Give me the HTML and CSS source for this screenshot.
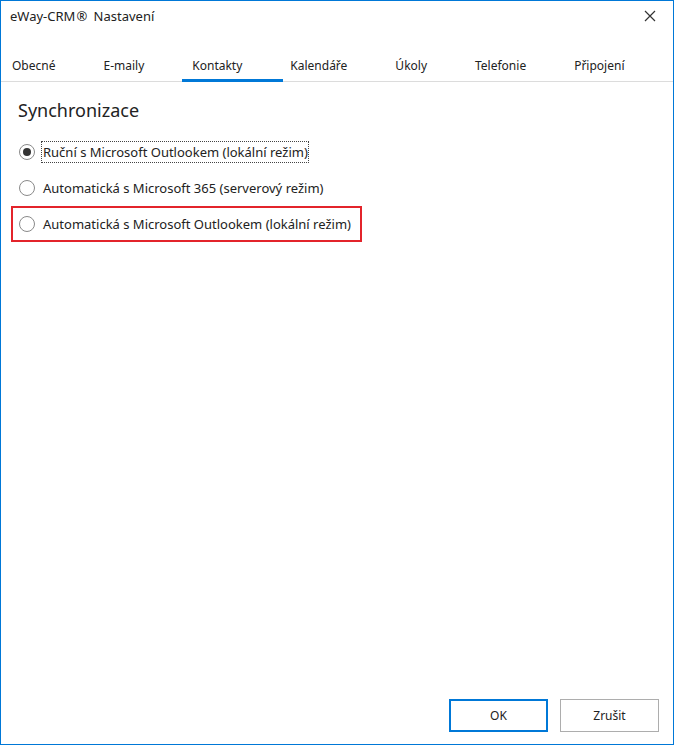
FILE: index.html
```html
<!DOCTYPE html>
<html lang="cs">
<head>
<meta charset="utf-8">
<title>eWay-CRM® Nastavení</title>
<link rel="stylesheet" href="styles.css">
</head>
<body>
<div class="window">
  <div class="titlebar">
    <span class="title">eWay-CRM<span class="reg">®</span> Nastavení</span>
    <span class="close" aria-label="Zavřít">
      <svg width="12" height="12" viewBox="0 0 12 12"><path d="M1 1 L11 11 M11 1 L1 11" stroke="#333" stroke-width="1.2" fill="none"/></svg>
    </span>
  </div>
  <div class="tabs">
    <div class="tab">Obecné</div>
    <div class="tab">E-maily</div>
    <div class="tab active">Kontakty</div>
    <div class="tab">Kalendáře</div>
    <div class="tab">Úkoly</div>
    <div class="tab">Telefonie</div>
    <div class="tab">Připojení</div>
  </div>
  <div class="content">
    <h1 class="heading">Synchronizace</h1>
    <div class="options">
      <div class="option"><span class="radio checked"></span><span class="label focused">Ruční s Microsoft Outlookem (lokální režim)</span></div>
      <div class="option"><span class="radio"></span><span class="label">Automatická s Microsoft 365 (serverový režim)</span></div>
      <div class="option highlight"><span class="radio"></span><span class="label">Automatická s Microsoft Outlookem (lokální režim)</span></div>
    </div>
  </div>
  <div class="footer">
    <button class="btn primary">OK</button>
    <button class="btn">Zrušit</button>
  </div>
</div>
</body>
</html>
```

FILE: styles.css
```css
* { box-sizing: border-box; }
html, body { margin: 0; padding: 0; background: #fff; }
body {
  font-family: "Noto Sans", "Open Sans", sans-serif;
  font-size: 12px;
  color: #222;
}
.window {
  width: 674px;
  height: 745px;
  border: 1px solid #0078d7;
  display: flex;
  flex-direction: column;
  background: #fff;
}
.titlebar {
  height: 30px;
  display: flex;
  align-items: center;
  justify-content: space-between;
  padding: 0 17px 0 9px;
}
.title { font-size: 13px; color: #222; }
.reg { margin: 0 3px 0 1px; }
.close { display: flex; align-items: center; }
.tabs {
  margin-top: 19px;
  display: flex;
  height: 32px;
  border-bottom: 1px solid #dcdcdc;
  padding-left: 1px;
}
.tab {
  position: relative;
  padding: 0 38px 0 10px;
  line-height: 32px;
  height: 31px;
  white-space: nowrap;
}
.tab.active::after {
  content: "";
  position: absolute;
  left: 0;
  bottom: -1px;
  width: 101px;
  height: 3px;
  background: #0078d7;
}
.content {
  padding: 16px 10px 0 10px;
}
.heading {
  margin: 0 0 12px 7px;
  font-size: 18px;
  font-weight: normal;
  line-height: 24px;
  color: #222;
}
.options { display: flex; flex-direction: column; font-size: 13px; }
.option {
  display: inline-flex;
  align-self: flex-start;
  align-items: center;
  height: 36px;
  border: 2px solid transparent;
  padding: 0 8px 0 6px;
}
.option.highlight { border-color: #e3242b; }
.radio {
  width: 16px;
  height: 16px;
  border: 1px solid #8a8a8a;
  border-radius: 50%;
  display: flex;
  align-items: center;
  justify-content: center;
  margin-right: 6px;
}
.radio.checked::after {
  content: "";
  width: 8px;
  height: 8px;
  border-radius: 50%;
  background: #333;
}
.label {
  padding: 1px 0 1px 1px;
  border: 1px dotted transparent;
  white-space: nowrap;
}
.label.focused { border-color: #444; }
.footer {
  margin-top: auto;
  display: flex;
  justify-content: flex-end;
  gap: 12px;
  padding: 0 14px 12px 0;
}
.btn {
  width: 99px;
  height: 33px;
  background: #fff;
  border: 1px solid #adadad;
  font-family: inherit;
  font-size: 12px;
  color: #222;
}
.btn.primary { border: 2px solid #0078d7; }
```
